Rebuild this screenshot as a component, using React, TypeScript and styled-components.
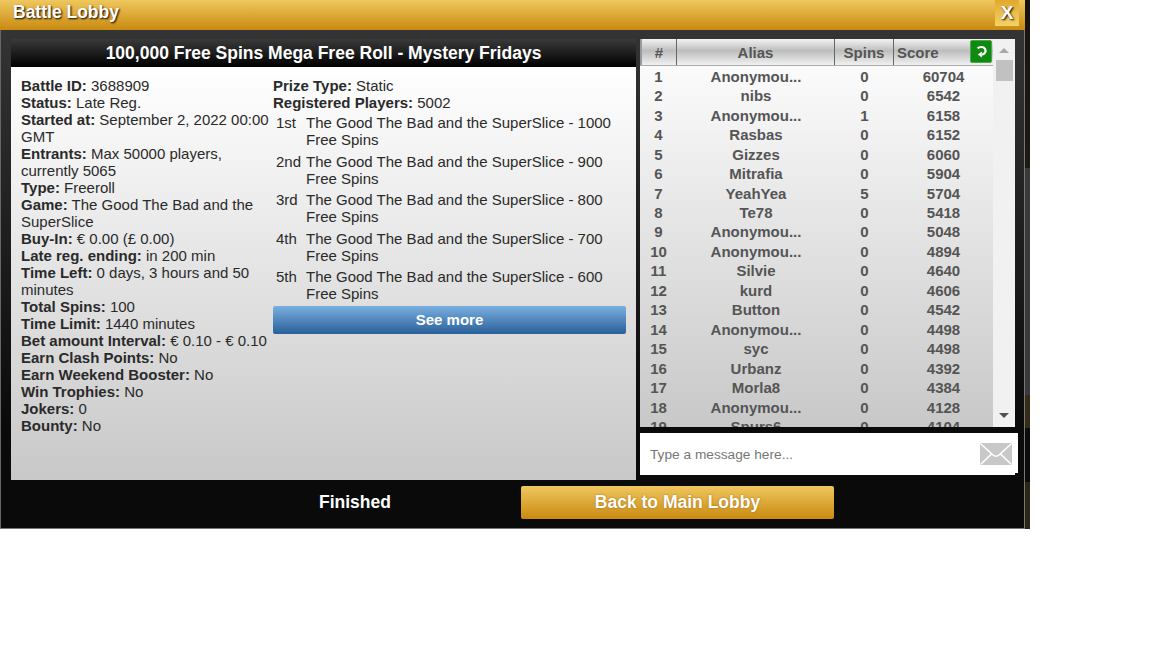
import React from "react";
import styled, { createGlobalStyle } from "styled-components";

const Global = createGlobalStyle`
  html, body { margin: 0; padding: 0; background: #fff; }
  body { font-family: "Liberation Sans", Arial, sans-serif; }
`;

const Page = styled.div`
  display: flex;
  align-items: flex-start;
  width: 1152px;
  height: 648px;
  overflow: hidden;
  background: #fff;
`;

const Modal = styled.div`
  width: 1025px;
  height: 529px;
  display: flex;
  flex-direction: column;
`;

const Backdrop = styled.div`
  width: 5px;
  height: 529px;
  background: linear-gradient(
    to bottom,
    #17140f 0,
    #1d1a14 168px,
    #3a3a3a 168px,
    #3a3a3a 395px,
    #352c16 395px,
    #352c16 428px,
    #0b0b0b 428px,
    #0b0b0b 482px,
    #2c2617 482px,
    #2c2617 529px
  );
`;

const Header = styled.header`
  height: 30px;
  flex: none;
  display: flex;
  justify-content: space-between;
  align-items: flex-start;
  padding-left: 13px;
  background: linear-gradient(to bottom, #efc75e 0%, #c98a10 100%);
`;

const HeaderTitle = styled.h1`
  margin: 2px 0 0;
  font-size: 17.5px;
  line-height: 21px;
  font-weight: 700;
  color: #fff;
  text-shadow: 1px 1px 2px #000;
`;

const CloseButton = styled.button`
  width: 24px;
  height: 26px;
  margin-right: 6px;
  padding: 0;
  border: 0;
  background: linear-gradient(to bottom, #e2a92e 0%, #f3d267 100%);
  color: #fff;
  font: 700 19px/26px "Liberation Sans", Arial, sans-serif;
  text-shadow: 1px 1px 2px #000;
`;

const Body = styled.div`
  flex: 1;
  display: flex;
  flex-direction: column;
  border-left: 1px solid #666;
  border-right: 1px solid #777;
  border-bottom: 1px solid #777;
  background: linear-gradient(to bottom, #343434 0%, #0a0a0a 80%, #0a0a0a 100%);
`;

const Main = styled.div`
  height: 450px;
  flex: none;
  display: flex;
  gap: 4px;
  padding: 9px 0 0 10px;
  box-sizing: border-box;
`;

const InfoPanel = styled.section`
  width: 625px;
  height: 441px;
  display: flex;
  flex-direction: column;
`;

const InfoTitle = styled.h2`
  margin: 0;
  height: 28px;
  flex: none;
  background: linear-gradient(to bottom, #3a3a3a 0%, #000 100%);
  color: #fff;
  text-align: center;
  font-size: 17.5px;
  line-height: 28px;
  font-weight: 700;
`;

const InfoBody = styled.div`
  flex: 1;
  display: grid;
  grid-template-columns: 252px 353px;
  padding: 10px 0 0 10px;
  background: linear-gradient(to bottom, #ffffff 0%, #c8c8c8 100%);
  color: #2a2a2a;
  font-size: 15px;
  line-height: 17px;
`;

const Column = styled.div`
  display: flex;
  flex-direction: column;
  align-items: stretch;
`;

const Fact = styled.div``;

const PrizeList = styled.ol`
  list-style: none;
  margin: 3px 0 0;
  padding: 0;
  display: flex;
  flex-direction: column;
  gap: 4.5px;
`;

const PrizeItem = styled.li`
  display: grid;
  grid-template-columns: 33px 310px;
`;

const Rank = styled.span`
  padding-left: 3px;
`;

const SeeMore = styled.button`
  height: 28px;
  margin-top: 4px;
  padding: 0;
  border: 0;
  border-radius: 2px;
  background: linear-gradient(to bottom, #79afe0 0%, #2a6099 100%);
  color: #fff;
  font: 700 15px/26px "Liberation Sans", Arial, sans-serif;
`;

const Side = styled.section`
  width: 378px;
  display: flex;
  flex-direction: column;
  gap: 6px;
`;

const TablePanel = styled.div`
  width: 375px;
  height: 388px;
  display: flex;
  overflow: hidden;
  background: #f1f1f1;
`;

const Leaderboard = styled.div`
  width: 353px;
  flex: none;
  display: flex;
  flex-direction: column;
  overflow: hidden;
  background: linear-gradient(to bottom, #ffffff 0%, #c8c8c8 100%);
  color: #555;
  font-size: 15px;
  font-weight: 700;
`;

const HeadRow = styled.div`
  height: 27px;
  flex: none;
  box-sizing: border-box;
  display: grid;
  grid-template-columns: 37px 158px 59px 99px;
  border-bottom: 1px solid #aaa;
  background: linear-gradient(to bottom, #f3f3f3 0%, #bdbdbd 45%, #f1f1f1 100%);
`;

const HeadCell = styled.div<{ $first?: boolean }>`
  display: flex;
  justify-content: center;
  align-items: center;
  border-right: 1px solid #666;
  border-left: ${(p) => (p.$first ? "2px solid #999" : "0")};
`;

const ScoreHead = styled.div`
  display: flex;
  justify-content: space-between;
  align-items: center;
  padding: 0 1px 0 3px;
`;

const Refresh = styled.button`
  width: 22px;
  height: 23px;
  margin-top: -1px;
  padding: 0;
  border: 1px solid #4aa84a;
  border-radius: 2px;
  background: #0d8a0f;
  display: flex;
  align-items: center;
  justify-content: center;
`;

const Rows = styled.div`
  flex: 1;
  overflow: hidden;
  padding-top: 0.7px;
`;

const Row = styled.div`
  height: 19.47px;
  line-height: 19.47px;
  display: grid;
  grid-template-columns: 37px 158px 59px 99px;
  text-align: center;
`;

const Scrollbar = styled.div`
  width: 22px;
  flex: none;
  position: relative;
  display: flex;
  flex-direction: column;
  align-items: center;
  justify-content: space-between;
  padding: 9px 0 9px;
  box-sizing: border-box;
`;

const ArrowUp = styled.div`
  width: 0;
  height: 0;
  border-left: 5px solid transparent;
  border-right: 5px solid transparent;
  border-bottom: 5px solid #a8a8a8;
`;

const ArrowDown = styled.div`
  width: 0;
  height: 0;
  border-left: 5px solid transparent;
  border-right: 5px solid transparent;
  border-top: 5px solid #505050;
`;

const Thumb = styled.div`
  position: absolute;
  top: 21px;
  left: 3px;
  width: 17px;
  height: 21px;
  background: #c1c1c1;
`;

const Chat = styled.div`
  position: relative;
  height: 42px;
  width: 378px;
  display: flex;
  align-items: center;
  justify-content: space-between;
  padding: 0 6px 0 10px;
  box-sizing: border-box;
  background: #fff;
  &::after {
    content: "";
    position: absolute;
    right: 0;
    bottom: 0;
    width: 3px;
    height: 2px;
    background: #0a0a0a;
  }
`;

const ChatPlaceholder = styled.span`
  font-size: 13.7px;
  color: #777;
`;

const Footer = styled.footer`
  flex: 1;
  display: grid;
  grid-template-columns: 520px 313px;
  align-items: start;
`;

const Finished = styled.div`
  padding-left: 188px;
  text-align: center;
  margin-top: 12px;
  font-size: 17.5px;
  line-height: 21px;
  font-weight: 700;
  color: #fff;
`;

const BackButton = styled.button`
  height: 33px;
  margin-top: 6px;
  padding: 0;
  border: 0;
  border-radius: 2px;
  background: linear-gradient(to bottom, #efc75e 0%, #c98a10 100%);
  color: #fff;
  font: 700 17.5px/31px "Liberation Sans", Arial, sans-serif;
  text-shadow: 0 0 2px rgba(120, 70, 0, 0.6);
`;

const leftFacts: [string, string][] = [
  ["Battle ID:", "3688909"],
  ["Status:", "Late Reg."],
  ["Started at:", "September 2, 2022 00:00 GMT"],
  ["Entrants:", "Max 50000 players, currently 5065"],
  ["Type:", "Freeroll"],
  ["Game:", "The Good The Bad and the SuperSlice"],
  ["Buy-In:", "€ 0.00 (£ 0.00)"],
  ["Late reg. ending:", "in 200 min"],
  ["Time Left:", "0 days, 3 hours and 50 minutes"],
  ["Total Spins:", "100"],
  ["Time Limit:", "1440 minutes"],
  ["Bet amount Interval:", "€ 0.10 - € 0.10"],
  ["Earn Clash Points:", "No"],
  ["Earn Weekend Booster:", "No"],
  ["Win Trophies:", "No"],
  ["Jokers:", "0"],
  ["Bounty:", "No"],
];

const prizes: [string, string][] = [
  ["1st", "1000"],
  ["2nd", "900"],
  ["3rd", "800"],
  ["4th", "700"],
  ["5th", "600"],
];

const players: [number, string, number, number][] = [
  [1, "Anonymou...", 0, 60704],
  [2, "nibs", 0, 6542],
  [3, "Anonymou...", 1, 6158],
  [4, "Rasbas", 0, 6152],
  [5, "Gizzes", 0, 6060],
  [6, "Mitrafia", 0, 5904],
  [7, "YeahYea", 5, 5704],
  [8, "Te78", 0, 5418],
  [9, "Anonymou...", 0, 5048],
  [10, "Anonymou...", 0, 4894],
  [11, "Silvie", 0, 4640],
  [12, "kurd", 0, 4606],
  [13, "Button", 0, 4542],
  [14, "Anonymou...", 0, 4498],
  [15, "syc", 0, 4498],
  [16, "Urbanz", 0, 4392],
  [17, "Morla8", 0, 4384],
  [18, "Anonymou...", 0, 4128],
  [19, "Spurs6", 0, 4104],
];

export default function App() {
  return (
    <Page>
      <Global />
      <Modal>
        <Header>
          <HeaderTitle>Battle Lobby</HeaderTitle>
          <CloseButton>X</CloseButton>
        </Header>
        <Body>
          <Main>
            <InfoPanel>
              <InfoTitle>100,000 Free Spins Mega Free Roll - Mystery Fridays</InfoTitle>
              <InfoBody>
                <Column>
                  {leftFacts.map(([k, v]) => (
                    <Fact key={k}>
                      <b>{k}</b> {v}
                    </Fact>
                  ))}
                </Column>
                <Column>
                  <Fact>
                    <b>Prize Type:</b> Static
                  </Fact>
                  <Fact>
                    <b>Registered Players:</b> 5002
                  </Fact>
                  <PrizeList>
                    {prizes.map(([rank, n]) => (
                      <PrizeItem key={rank}>
                        <Rank>{rank}</Rank>
                        <span>The Good The Bad and the SuperSlice - {n} Free Spins</span>
                      </PrizeItem>
                    ))}
                  </PrizeList>
                  <SeeMore>See more</SeeMore>
                </Column>
              </InfoBody>
            </InfoPanel>
            <Side>
              <TablePanel>
                <Leaderboard>
                  <HeadRow>
                    <HeadCell $first>#</HeadCell>
                    <HeadCell>Alias</HeadCell>
                    <HeadCell>Spins</HeadCell>
                    <ScoreHead>
                      Score
                      <Refresh aria-label="Refresh">
                        <svg width="15" height="15" viewBox="0 0 15 15" fill="none">
                          <path d="M3.6 4.4 C5.4 2.6 9.4 2.4 11 4.8 C12.4 7 11 10.4 7.6 10.6" stroke="#fff" strokeWidth="2.2" />
                          <path d="M7.8 7.4 L3.8 10.6 L7.8 13.6 Z" fill="#fff" />
                        </svg>
                      </Refresh>
                    </ScoreHead>
                  </HeadRow>
                  <Rows>
                    {players.map(([n, alias, spins, score]) => (
                      <Row key={n}>
                        <span>{n}</span>
                        <span>{alias}</span>
                        <span>{spins}</span>
                        <span>{score}</span>
                      </Row>
                    ))}
                  </Rows>
                </Leaderboard>
                <Scrollbar>
                  <ArrowUp />
                  <Thumb />
                  <ArrowDown />
                </Scrollbar>
              </TablePanel>
              <Chat>
                <ChatPlaceholder>Type a message here...</ChatPlaceholder>
                <svg width="32" height="22" viewBox="0 0 32 22">
                  <rect width="32" height="22" rx="1.5" fill="#c8c8c8" />
                  <path d="M1 1 L13 12 Q16 14.5 19 12 L31 1 M1 21 L11.5 11 M31 21 L20.5 11" stroke="#fff" strokeWidth="1.6" fill="none" />
                </svg>
              </Chat>
            </Side>
          </Main>
          <Footer>
            <Finished>Finished</Finished>
            <BackButton>Back to Main Lobby</BackButton>
          </Footer>
        </Body>
      </Modal>
      <Backdrop />
    </Page>
  );
}
